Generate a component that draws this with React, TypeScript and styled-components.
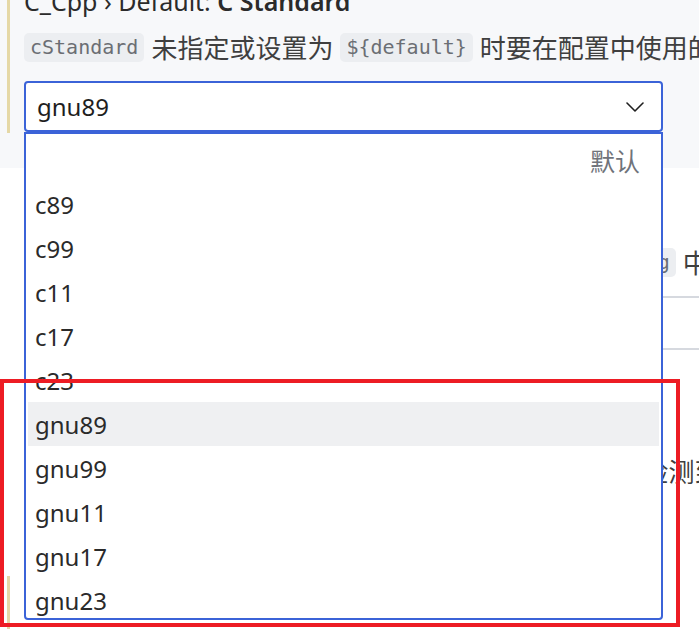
import React from "react";
import styled, { createGlobalStyle } from "styled-components";

const Global = createGlobalStyle`
  html, body { margin: 0; padding: 0; background: #ffffff; overflow: hidden; }
  body { font-family: "Noto Sans", "Noto Sans CJK SC", sans-serif; }
`;

const Page = styled.div`
  position: relative;
  width: 699px;
  height: 629px;
  overflow: hidden;
  background: #ffffff;
`;

const Scroll = styled.div`
  margin-top: -16px;
  width: 820px;
  display: flex;
  flex-direction: column;
`;

const Item = styled.div<{ $bg?: string }>`
  display: flex;
  align-items: flex-start;
  background: ${(p) => p.$bg ?? "#ffffff"};
`;

const ModBar = styled.div<{ $on?: boolean }>`
  flex: 0 0 3px;
  width: 3px;
  height: 149px;
  margin-left: 7px;
  background: ${(p) => (p.$on ? "#e5d8a6" : "transparent")};
`;

const Content = styled.div<{ $pt: number; $pb: number }>`
  flex: 1;
  min-width: 0;
  padding: ${(p) => p.$pt}px 0 ${(p) => p.$pb}px 14px;
  display: flex;
  flex-direction: column;
`;

const Title = styled.div`
  height: 32px;
  line-height: 30px;
  font-size: 25px;
  color: #2b2b2b;
  white-space: nowrap;
`;

const TitleStrong = styled.span`
  font-weight: 600;
`;

const DescRow = styled.div`
  margin-top: 11px;
  height: 36px;
  display: flex;
  align-items: center;
  gap: 7px;
  font-size: 26px;
  color: #3f3f3f;
  white-space: nowrap;
`;

const Chip = styled.span`
  display: inline-flex;
  align-items: center;
  height: 29px;
  padding: 0 6px;
  border-radius: 5px;
  background: #eceef1;
  color: #6b6e74;
  font-family: "DejaVu Sans Mono", "Liberation Mono", monospace;
  font-size: 20px;
`;

const SelectWrap = styled.div`
  position: relative;
  margin-top: 16px;
  width: 639px;
  height: 51px;
`;

const SelectBox = styled.div`
  box-sizing: border-box;
  width: 639px;
  height: 51px;
  border: 2px solid #3b63d8;
  border-radius: 4px;
  background: #ffffff;
  display: flex;
  align-items: center;
  justify-content: space-between;
  padding: 0 17px 0 11px;
  font-size: 24px;
  color: #1e1e1e;
`;

const Dropdown = styled.div`
  position: absolute;
  top: 51px;
  left: 0;
  z-index: 5;
  box-sizing: border-box;
  width: 639px;
  height: 488px;
  border: 2px solid #3b63d8;
  border-radius: 0 0 4px 4px;
  background: #ffffff;
  padding: 4px 2px 0;
  overflow: hidden;
  display: flex;
  flex-direction: column;
`;

const Option = styled.div<{ $active?: boolean }>`
  flex: 0 0 44px;
  height: 44px;
  display: flex;
  align-items: center;
  justify-content: space-between;
  padding: 0 19px 0 7px;
  font-size: 24px;
  color: #2a2a2a;
  background: ${(p) => (p.$active ? "#eff0f2" : "transparent")};
`;

const OptionHint = styled.span`
  margin-left: auto;
  font-size: 25px;
  color: #70737a;
`;

const ListWidget = styled.div`
  margin-top: 16px;
  width: 760px;
  height: 50px;
  border-top: 2px solid #d6d9df;
  border-bottom: 2px solid #d6d9df;
`;

const RedFrame = styled.div`
  position: absolute;
  left: 0;
  top: 379px;
  width: 680px;
  height: 248px;
  box-sizing: border-box;
  border: 4px solid #ed1c24;
  z-index: 10;
  pointer-events: none;
`;

const Chevron = () => (
  <svg width="18" height="10" viewBox="0 0 18 10" fill="none">
    <path d="M1 1l8 8 8-8" stroke="#1f1f1f" strokeWidth="1.6" strokeLinecap="round" strokeLinejoin="round" />
  </svg>
);

const options = ["c89", "c99", "c11", "c17", "c23", "gnu89", "gnu99", "gnu11", "gnu17", "gnu23"];

export default function App() {
  return (
    <Page>
      <Global />
      <Scroll>
        <Item $bg="#f7f8fa">
          <ModBar $on />
          <Content $pt={2} $pb={36}>
            <Title>
              C_Cpp › Default: <TitleStrong>C Standard</TitleStrong>
            </Title>
            <DescRow>
              <Chip>cStandard</Chip>
              <span>未指定或设置为</span>
              <Chip>{"${default}"}</Chip>
              <span>时要在配置中使用的值。</span>
            </DescRow>
            <SelectWrap>
              <SelectBox>
                <span>gnu89</span>
                <Chevron />
              </SelectBox>
              <Dropdown>
                <Option>
                  <OptionHint>默认</OptionHint>
                </Option>
                {options.map((o) => (
                  <Option key={o} $active={o === "gnu89"}>
                    {o}
                  </Option>
                ))}
              </Dropdown>
            </SelectWrap>
          </Content>
        </Item>

        <Item>
          <ModBar />
          <Content $pt={33} $pb={30}>
            <Title>
              C_Cpp › Default: <TitleStrong>Compiler Args</TitleStrong>
            </Title>
            <DescRow>
              <span>要在配置中使用的编译器参数，位于</span>
              <Chip>compilerArgsConfig</Chip>
              <span>中的值。</span>
            </DescRow>
            <ListWidget />
          </Content>
        </Item>

        <Item>
          <ModBar />
          <Content $pt={30} $pb={87}>
            <Title>
              C_Cpp › Default: <TitleStrong>Compiler Path</TitleStrong>
            </Title>
            <DescRow>
              <span>{"用于推断编译器路径的设置, \u00a0如果未设置将尝试在系统检测到的编译器中查找。"}</span>
            </DescRow>
          </Content>
        </Item>

        <Item>
          <ModBar $on />
          <Content $pt={4} $pb={40}>
            <Title>
              C_Cpp › Default: <TitleStrong>Cpp Standard</TitleStrong>
            </Title>
            <DescRow>
              <span>未指定或设置为默认值时要在配置中使用的 C++ 语言标准版本。</span>
            </DescRow>
          </Content>
        </Item>
      </Scroll>
      <RedFrame />
    </Page>
  );
}
